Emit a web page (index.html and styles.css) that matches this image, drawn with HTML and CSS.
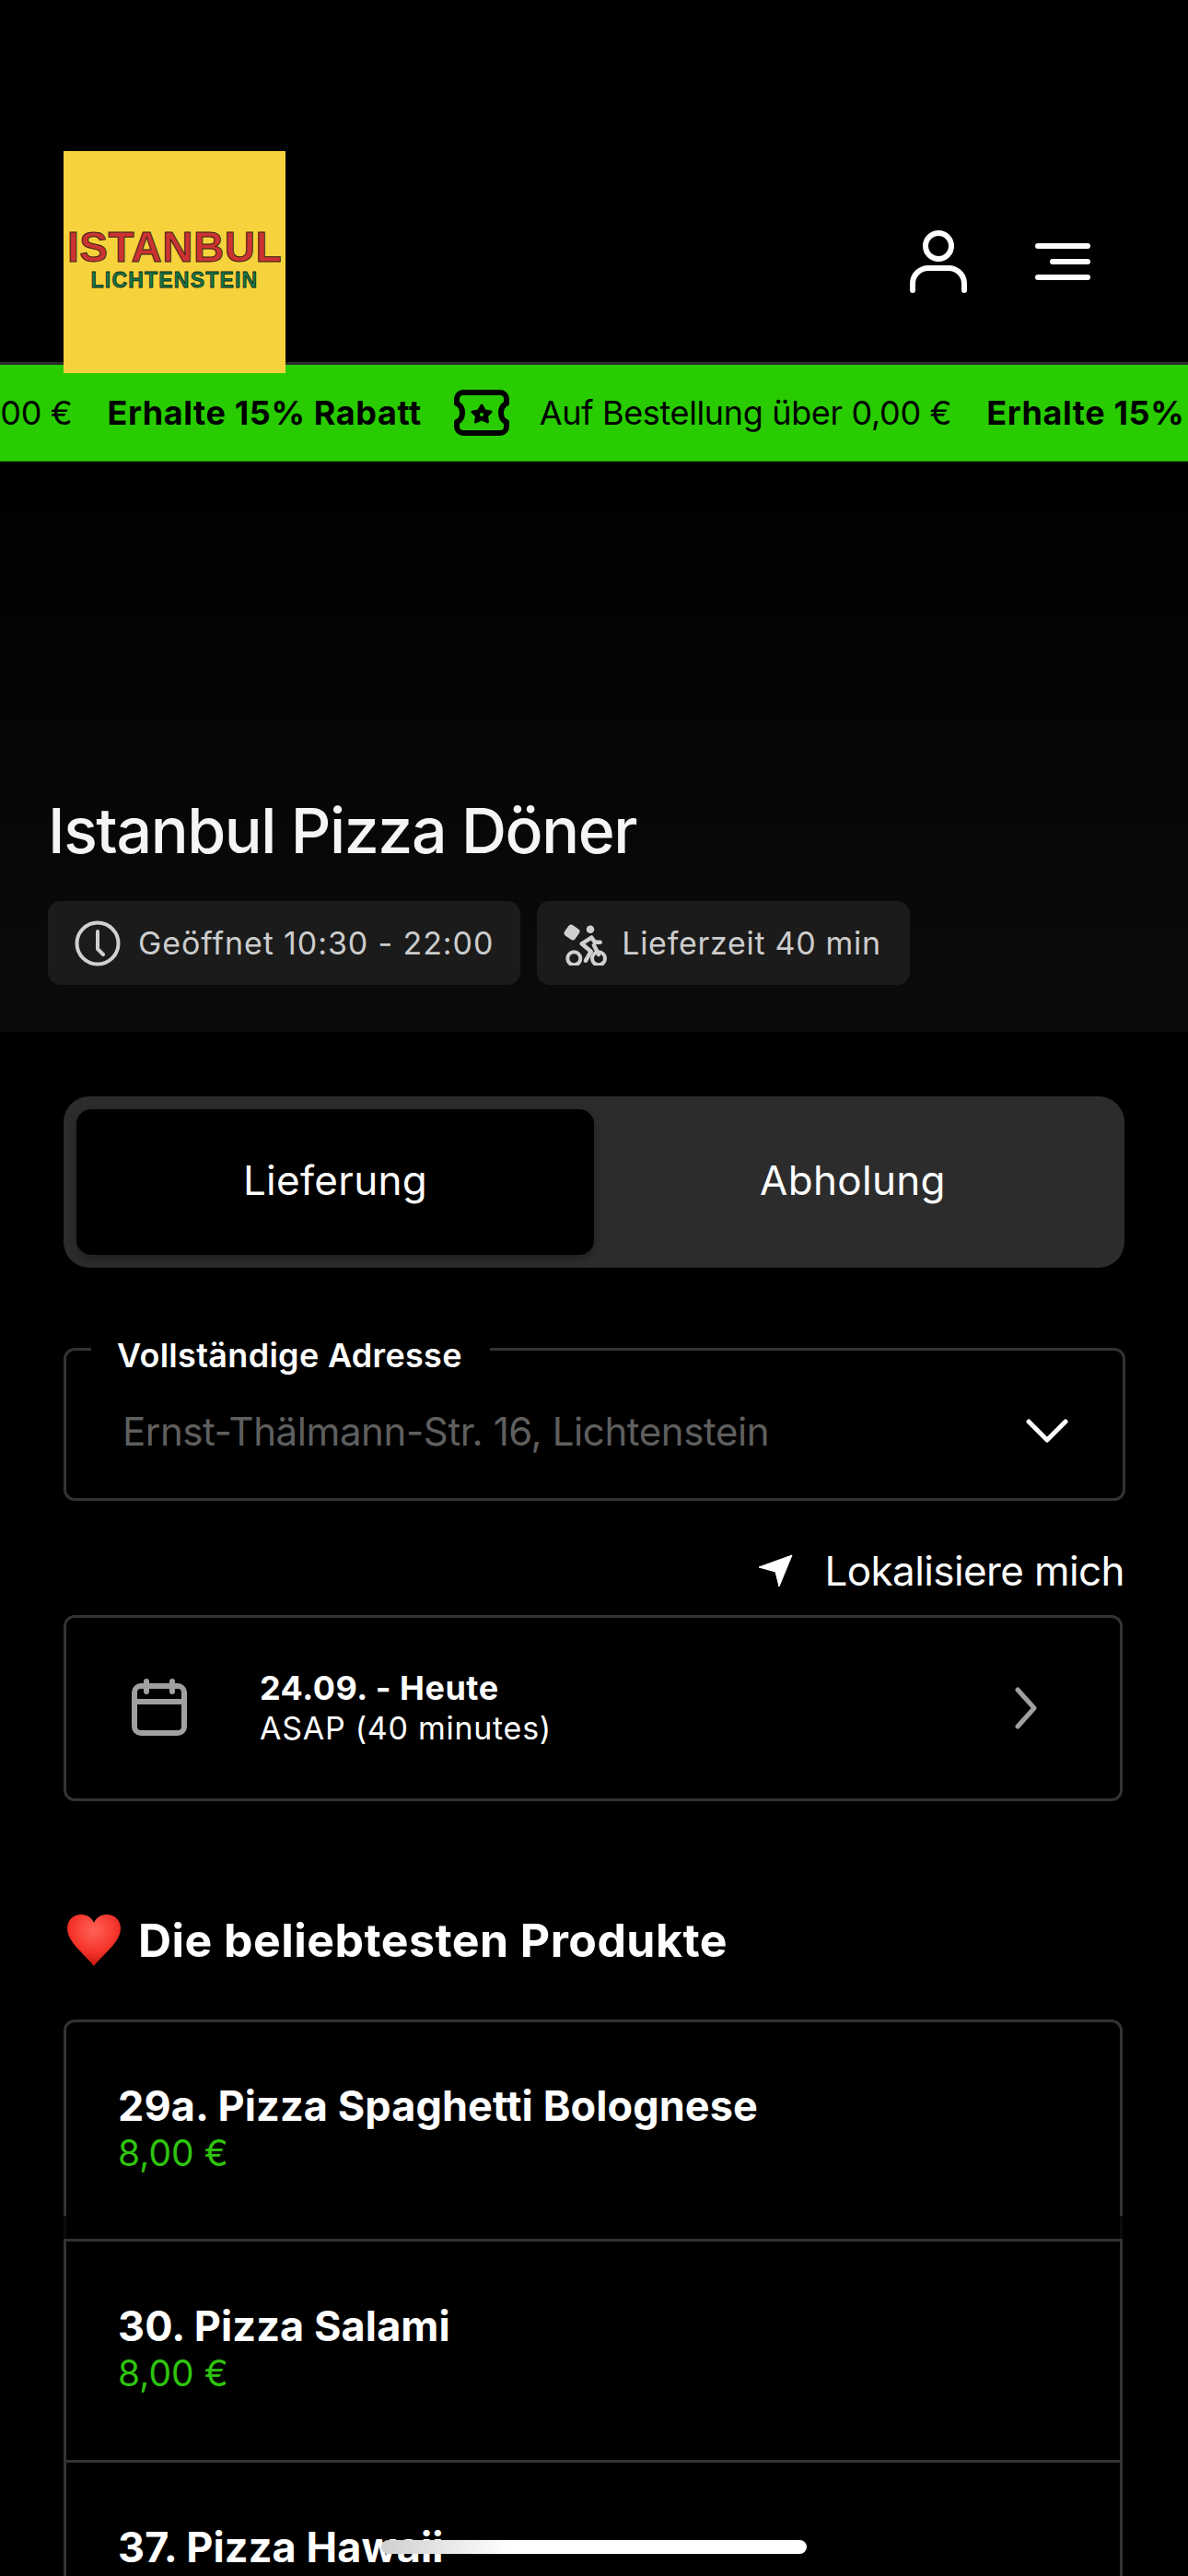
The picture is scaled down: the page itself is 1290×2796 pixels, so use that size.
FILE: index.html
```html
<!DOCTYPE html>
<html lang="de">
<head>
    <meta charset="UTF-8">
    <meta name="viewport" content="width=device-width, initial-scale=1.0">
    <title>Istanbul Pizza Döner</title>
    <link rel="stylesheet" href="styles.css">
</head>
<body>
    <header class="top-bar">
        <div class="logo">
            <span class="logo-name">ISTANBUL</span>
            <span class="logo-city">LICHTENSTEIN</span>
        </div>
        <div class="top-icons">
            <svg class="icon-user" width="62" height="70" viewBox="0 0 62 70" fill="none" stroke="#fff" stroke-width="6" stroke-linecap="round">
                <circle cx="31" cy="17" r="14"/>
                <path d="M3 65v-7c0-10 8-17 17-17h22c9 0 17 7 17 17v7"/>
            </svg>
            <svg class="icon-menu" width="60" height="40" viewBox="0 0 60 40" fill="none" stroke="#fff" stroke-width="6" stroke-linecap="round">
                <path d="M3 3h54M19 20h38M3 37h54"/>
            </svg>
        </div>
    </header>

    <div class="promo">
        <div class="promo-track">
            <span>Auf Bestellung über 0,00 €</span>
            <b>Erhalte 15% Rabatt</b>
            <svg class="icon-ticket" width="60" height="50" viewBox="0 0 60 50" fill="none" stroke="#000" stroke-width="6" stroke-linejoin="round">
                <path d="M10 3h40a7 7 0 0 1 7 7v5c-5 2-6 6-6 10s1 8 6 10v5a7 7 0 0 1-7 7H10a7 7 0 0 1-7-7v-5c5-2 6-6 6-10s-1-8-6-10v-5a7 7 0 0 1 7-7z"/>
                <path d="M30 17l3.500 6 6.500 1-4.500 4.500 1 6.500-6.500-3-6.500 3 1-6.500-4.500-4.500 6.500-1z" fill="#000" stroke-width="3"/>
                <circle cx="30" cy="27" r="2" fill="#28cc00" stroke="none"/>
            </svg>
            <span>Auf Bestellung über 0,00 €</span>
            <b>Erhalte 15% Rabatt</b>
        </div>
    </div>

    <section class="hero">
        <h1>Istanbul Pizza Döner</h1>
        <div class="chips">
            <div class="chip">
                <svg width="50" height="50" viewBox="0 0 50 50" fill="none" stroke="#d0d0d0" stroke-width="4" stroke-linecap="round" stroke-linejoin="round">
                    <circle cx="25" cy="25" r="22.500"/>
                    <path d="M25 12v19l6 6"/>
                </svg>
                <span>Geöffnet 10:30 - 22:00</span>
            </div>
            <div class="chip chip-bike">
                <svg width="48" height="48" viewBox="0 -3 48 48" fill="none" stroke="#d0d0d0" stroke-width="4" stroke-linecap="round" stroke-linejoin="round">
                    <rect x="3.500" y="3.500" width="11" height="11" rx="2" transform="rotate(35 9 9)" fill="#d0d0d0" stroke-width="3"/>
                    <circle cx="29" cy="5.700" r="4.300" fill="#d0d0d0" stroke="none"/>
                    <circle cx="11.300" cy="37.300" r="7"/>
                    <circle cx="38" cy="37.300" r="7"/>
                    <path d="M30.300 14.700l-10.600 6.600 10 8.400-5.700 10M30.300 14.700l3.700 5h5.700M33 23l5 10" stroke-width="4.500"/>
                </svg>
                <span>Lieferzeit 40 min</span>
            </div>
        </div>
    </section>

    <main class="content">
        <div class="tabs">
            <div class="tab active">Lieferung</div>
            <div class="tab">Abholung</div>
        </div>

        <div class="address">
            <span class="address-label">Vollständige Adresse</span>
            <span class="address-value">Ernst-Thälmann-Str. 16, Lichtenstein</span>
            <svg width="46" height="26" viewBox="0 0 46 26" fill="none" stroke="#fff" stroke-width="5" stroke-linecap="round" stroke-linejoin="round">
                <path d="M3 3l20 20L43 3"/>
            </svg>
        </div>

        <div class="locate">
            <svg width="38" height="36" viewBox="0 0 38 36" fill="#fff" stroke="#fff" stroke-width="1" stroke-linejoin="round">
                <path d="M37 1L1 14l18 5 4 16z"/>
            </svg>
            <span>Lokalisiere mich</span>
        </div>

        <div class="date-box">
            <svg class="icon-cal" width="60" height="62" viewBox="0 0 60 62" fill="none" stroke="#a0a0a0" stroke-width="6" stroke-linecap="round" stroke-linejoin="round">
                <rect x="3" y="8" width="54" height="51" rx="7"/>
                <path d="M3 25h54M16 3v11M44 3v11"/>
            </svg>
            <div class="date-text">
                <b>24.09. - Heute</b>
                <span>ASAP (40 minutes)</span>
            </div>
            <svg width="24" height="46" viewBox="0 0 24 46" fill="none" stroke="#a0a0a0" stroke-width="5" stroke-linecap="round" stroke-linejoin="round">
                <path d="M3 3l18 20L3 43"/>
            </svg>
        </div>

        <h2 class="popular">
            <svg width="60" height="58" viewBox="0 0 60 58">
                <defs>
                    <radialGradient id="heartFill" cx="0.5" cy="0.3" r="0.7">
                        <stop offset="0" stop-color="#ff6258"/>
                        <stop offset="0.6" stop-color="#f5352b"/>
                        <stop offset="1" stop-color="#c9150f"/>
                    </radialGradient>
                </defs>
                <path d="M30 57C20 44 1 31 1 16 1 6 9 1 16 1c7 0 12 4 14 9 2-5 7-9 14-9 7 0 15 5 15 15 0 15-19 28-29 41z" fill="url(#heartFill)"/>
            </svg>
            <span>Die beliebtesten Produkte</span>
        </h2>

        <div class="product first">
            <b>29a. Pizza Spaghetti Bolognese</b>
            <span>8,00 €</span>
        </div>
        <div class="product-gap"></div>
        <div class="product">
            <b>30. Pizza Salami</b>
            <span>8,00 €</span>
        </div>
        <div class="product">
            <b>37. Pizza Hawaii</b>
            <span>8,00 €</span>
        </div>
    </main>

    <div class="home-bar"></div>
</body>
</html>
```

FILE: styles.css
```css
* { box-sizing: border-box; }
html, body { margin: 0; padding: 0; }
body { width: 1290px; height: 2796px; overflow: hidden; position: relative; background: #000; color: #fff; font-family: Inter, "Noto Sans", sans-serif; }

.top-bar { display: flex; justify-content: space-between; height: 393px; padding: 164px 106px 0 69px; }
.logo { width: 241px; height: 241px; z-index: 2; background: #f6d33c; display: flex; flex-direction: column; align-items: center; padding-top: 85px; font-family: "Liberation Sans", sans-serif; font-weight: bold; }
.logo-name { font-size: 46px; line-height: 38px; color: #cc3333; -webkit-text-stroke: 1px #3a2415; letter-spacing: 0.5px; }
.logo-city { font-size: 23px; line-height: 22px; margin-top: 6px; color: #157a45; -webkit-text-stroke: 0.8px #12281c; letter-spacing: 1.2px; }
.top-icons { display: flex; align-items: flex-start; gap: 74px; padding-top: 86px; }
.icon-menu { margin-top: 14px; }

.promo { height: 108px; background: #28cc00; border-top: 3px solid #2c2c2c; border-bottom: 1px solid #1f9c00; overflow: hidden; color: #000; font-size: 36px; }
.promo-track { display: flex; align-items: center; height: 100%; margin-left: -369px; white-space: nowrap; }
.promo-track span { margin-right: 38px; letter-spacing: -0.35px; }
.promo-track b { margin-right: 35px; letter-spacing: 0.6px; }
.icon-ticket { flex-shrink: 0; margin-right: 33px; }

.hero { height: 619px; padding: 359px 52px 0; background: linear-gradient(#000, #0b0b0b); }
.hero h1 { margin: 0; font-size: 68px; font-weight: 500; line-height: 82px; letter-spacing: -1.4px; color: #f5f5f5; }
.chips { display: flex; gap: 18px; margin-top: 36px; }
.chip { display: flex; align-items: center; gap: 19px; height: 91px; padding: 0 29px; background: #1b1b1b; border-radius: 14px; color: #ccc; font-size: 34px; letter-spacing: 0.9px; }
.chip-bike { gap: 15px; padding-right: 31px; letter-spacing: 0.7px; }

.content { padding: 70px 69px 0; }
.tabs { display: flex; height: 186px; padding: 14px; background: #2c2c2c; border-radius: 28px; font-size: 44px; }
.tab { flex: 1; display: flex; align-items: center; justify-content: center; padding-bottom: 5px; border-radius: 16px; letter-spacing: 0.3px; }
.tab.active { background: #000; box-shadow: 0 4px 10px rgba(0,0,0,0.3); }

.address { position: relative; display: flex; align-items: center; justify-content: space-between; height: 166px; margin: 87px -1px 0 0; padding: 14px 59px 0 61px; border: 3px solid #333; border-radius: 12px; }
.address-label { position: absolute; top: -12px; left: 27px; padding: 0 30px 0 28px; background: #000; font-size: 36px; font-weight: 600; line-height: 34px; letter-spacing: 0.3px; }
.address-value { font-size: 42px; letter-spacing: -0.4px; color: #5f5f5f; }

.locate { display: flex; justify-content: flex-end; align-items: center; gap: 34px; margin-top: 51px; font-size: 44px; height: 50px; letter-spacing: -0.6px; }
.date-box { display: flex; align-items: center; height: 202px; margin-top: 23px; margin-right: 2px; padding: 0 90px 0 71px; border: 3px solid #333; border-radius: 12px; }
.icon-cal { margin-bottom: 2px; }
.date-text { flex: 1; display: flex; flex-direction: column; margin-left: 79px; font-size: 34px; line-height: 43px; letter-spacing: 0.73px; }
.date-text b { font-size: 36px; font-weight: 700; letter-spacing: 0.5px; }

.popular { margin: 122px 0 0; height: 58px; display: flex; align-items: center; gap: 18px; padding-left: 3px; font-size: 50px; font-weight: 700; line-height: 58px; letter-spacing: 0.45px; }

.product { display: flex; flex-direction: column; height: 240px; margin-right: 2px; padding: 65px 56px 0; border: solid #333; border-width: 3px 3px 0; }
.product b { font-size: 45px; font-weight: 700; line-height: 54px; letter-spacing: 0.1px; }
.product span { font-size: 39px; line-height: 48px; color: #2fc40f; }
.product.first { height: 213px; margin-top: 57px; padding-top: 64px; border-radius: 12px 12px 0 0; }
.product-gap { height: 25px; margin-right: 2px; border: solid #0c0c0c; border-width: 0 3px; }

.home-bar { position: absolute; left: 414px; top: 2757px; width: 462px; height: 15px; border-radius: 8px; background: linear-gradient(90deg, #cfcfcf, #fff 30%); }
```
